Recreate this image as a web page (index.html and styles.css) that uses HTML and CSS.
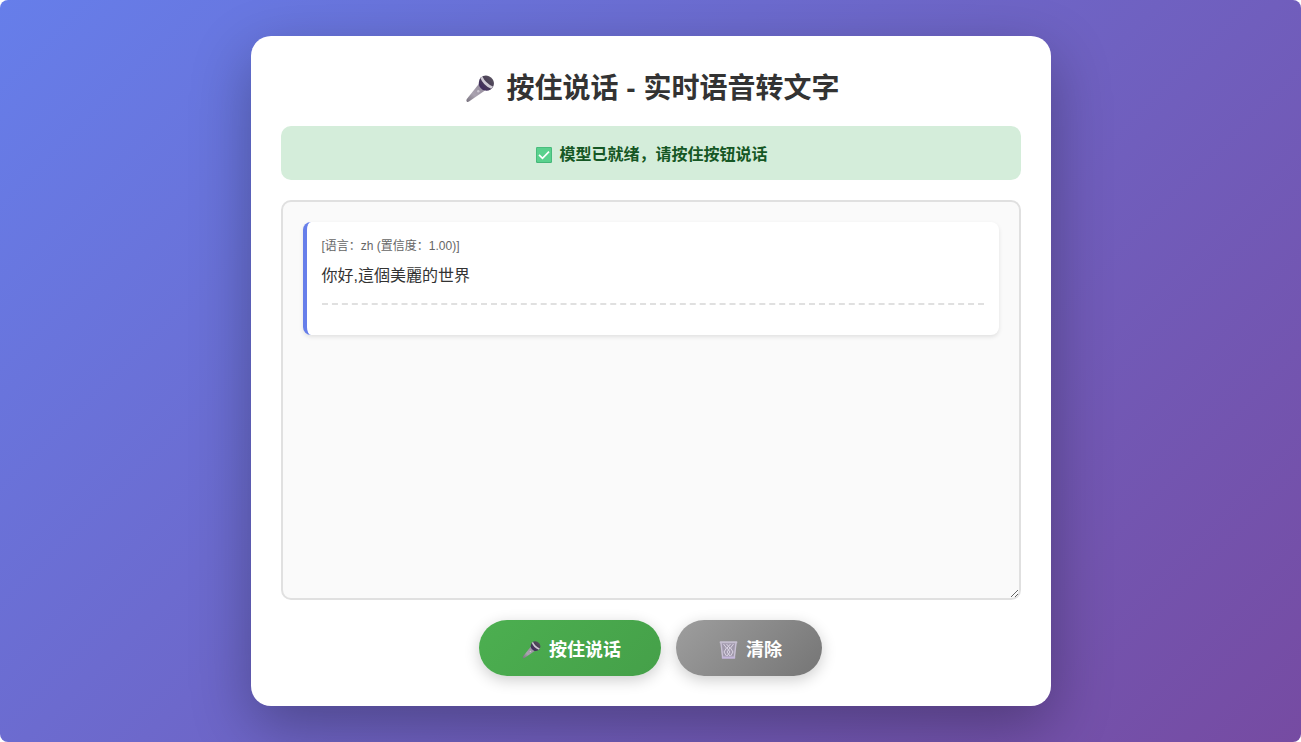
FILE: index.html
```html
<!DOCTYPE html>
<html lang="zh-CN">
<head>
    <meta charset="UTF-8">
    <meta name="viewport" content="width=device-width, initial-scale=1.0">
    <title>按住说话 - 实时语音转文字</title>
    <link rel="stylesheet" href="styles.css">
</head>
<body>
    <!-- shared icon shapes -->
    <svg class="icon-defs" aria-hidden="true">
        <defs>
            <linearGradient id="handle" x1="0" y1="1" x2="1" y2="0">
                <stop offset="0" stop-color="#77717d"/>
                <stop offset="0.4" stop-color="#aaa3b0"/>
                <stop offset="1" stop-color="#918899"/>
            </linearGradient>
            <linearGradient id="head" x1="1" y1="0" x2="0" y2="1">
                <stop offset="0" stop-color="#5d5763"/>
                <stop offset="0.45" stop-color="#4a4056"/>
                <stop offset="1" stop-color="#3b2260"/>
            </linearGradient>
            <symbol id="mic" viewBox="0 0 28 28">
                <path d="M12.8 9 19 15.4 3 26.6Q1.5 27.4.7 26.4-.1 25.4.8 24Z" fill="url(#handle)"/>
                <path d="M14.5 2.8Q18.5-.8 23 1.2 27.5 3.3 27.9 7.8 28.2 12 24.6 14.4 21.5 16.4 18 15.3 13.7 13.2 12.8 9.4 12.5 5.2 14.5 2.8Z" fill="url(#head)"/>
                <path d="M14.4 2.9 16.4 1.4Q19.4 8 27 11.5L25.3 13.8Q17.3 10.4 14.4 2.9Z" fill="#d0cbd5"/>
                <circle cx="12.3" cy="16.2" r="1.2" fill="#cbc6d0"/>
            </symbol>
            <symbol id="check" viewBox="0 0 16 16">
                <rect width="16" height="16" rx="1.2" fill="#44b678"/>
                <rect x="0.8" y="0.7" width="14.4" height="14.2" rx="0.8" fill="#59d18d"/>
                <path d="M3 7.8 6.5 11.3 13 4.6" fill="none" stroke="#fff" stroke-width="1.7"/>
            </symbol>
            <symbol id="trash" viewBox="0 0 18 18">
                <path d="M1 1.5H17L15.2 17H2.8Z" fill="#a199ac"/>
                <path d="M4 3 7 7 4.5 11 7 15M7 3 10.5 7 7.5 11 10.5 15M11 3 7.5 7 10.5 11 7.5 15M14 3 11 7 13.5 11 11 15" fill="none" stroke="#dcd6e5" stroke-width="1"/>
                <path d="M1.5 2 3.1 16M16.5 2 14.9 16" fill="none" stroke="#c9c1d5" stroke-width="1.4"/>
                <rect x="0.2" y="0.3" width="17.6" height="2" rx="0.6" fill="#c5bed0"/>
                <rect x="2.3" y="15.5" width="13.4" height="2.2" rx="0.6" fill="#c5b7dc"/>
            </symbol>
        </defs>
    </svg>

    <main class="container">
        <h1 class="title">
            <svg class="icon icon-title" aria-hidden="true"><use href="#mic"/></svg>
            按住说话 - 实时语音转文字
        </h1>

        <div class="status" role="status">
            <svg class="icon icon-status" aria-hidden="true"><use href="#check"/></svg>
            模型已就绪，请按住按钮说话
        </div>

        <div class="results">
            <div class="result-item">
                <div class="result-info">[语言：zh (置信度：1.00)]</div>
                <div class="result-text">你好,這個美麗的世界</div>
                <hr class="divider">
            </div>
        </div>

        <div class="controls">
            <button type="button" class="btn btn-record">
                <svg class="icon icon-btn" aria-hidden="true"><use href="#mic"/></svg>
                按住说话
            </button>
            <button type="button" class="btn btn-clear">
                <svg class="icon icon-btn" aria-hidden="true"><use href="#trash"/></svg>
                清除
            </button>
        </div>
    </main>
</body>
</html>
```
FILE: styles.css
```css
* {
    margin: 0;
    padding: 0;
    box-sizing: border-box;
}
html {
    background: #fff;
}
body {
    font-family: "Liberation Sans", "Noto Sans CJK SC", sans-serif;
    background: linear-gradient(135deg, #667eea 0%, #764ba2 100%);
    border-radius: 8px;
    min-height: 100vh;
    display: flex;
    justify-content: center;
    align-items: center;
    padding: 20px;
}
.icon-defs {
    position: absolute;
    width: 0;
    height: 0;
}
.container {
    background: white;
    border-radius: 20px;
    box-shadow: 0 20px 60px rgba(0, 0, 0, 0.3);
    padding: 30px;
    width: 100%;
    max-width: 800px;
}
.title {
    display: flex;
    justify-content: center;
    align-items: center;
    gap: 9px;
    color: #333;
    font-size: 28px;
    line-height: 46px;
    margin-bottom: 14px;
}
.icon {
    flex: none;
}
.icon-title {
    width: 36px;
    height: 28px;
}
.icon-status {
    width: 22px;
    height: 16px;
}
.icon-btn {
    width: 25px;
    height: 18px;
}
.status {
    display: flex;
    justify-content: center;
    align-items: center;
    gap: 4px;
    background: #d4edda;
    color: #155724;
    border-radius: 10px;
    padding: 17px 15px 13px;
    font-size: 16px;
    font-weight: bold;
    line-height: 24px;
    margin-bottom: 20px;
}
.results {
    height: 400px;
    border: 2px solid #e0e0e0;
    border-radius: 10px;
    background: #fafafa;
    padding: 20px;
    margin-bottom: 20px;
    overflow-y: auto;
    resize: vertical;
}
.result-item {
    background: white;
    border-left: 4px solid #667eea;
    border-radius: 8px;
    box-shadow: 0 2px 4px rgba(0, 0, 0, 0.1);
    padding: 15px;
}
.result-info {
    color: #666;
    font-size: 12px;
    line-height: 18px;
    margin-bottom: 8px;
}
.result-text {
    color: #333;
    font-size: 16px;
    line-height: 25px;
}
.divider {
    border: none;
    border-top: 2px dashed #e0e0e0;
    margin: 15px 0;
}
.controls {
    display: flex;
    justify-content: center;
    gap: 15px;
}
.btn {
    display: flex;
    align-items: center;
    gap: 5px;
    border: none;
    border-radius: 50px;
    padding: 17px 40px 13px;
    color: white;
    font-family: inherit;
    font-size: 18px;
    font-weight: bold;
    line-height: 26px;
    cursor: pointer;
    box-shadow: 0 4px 15px rgba(0, 0, 0, 0.2);
}
.btn-record {
    background: linear-gradient(135deg, #4caf50 0%, #45a049 100%);
}
.btn-clear {
    background: linear-gradient(135deg, #9e9e9e 0%, #757575 100%);
}
```
